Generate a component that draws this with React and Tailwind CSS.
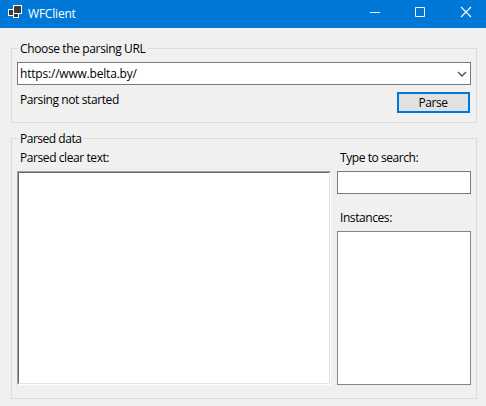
import React from "react";

function Group({ title, titleClass, className, children }) {
  return (
    <section className={`border border-[#dcdcdc] px-[5px] ${className}`}>
      <h2 className={`-mt-2 ml-px h-4 whitespace-nowrap bg-[#f0f0f0] pl-[2px] leading-4 ${titleClass}`}>{title}</h2>
      {children}
    </section>
  );
}

export default function App() {
  return (
    <div className="flex h-[406px] w-[486px] flex-col overflow-hidden bg-[#f0f0f0] font-['Open_Sans','Noto_Sans',sans-serif] text-[12px] leading-4 text-black">
      <header className="flex h-7 shrink-0 items-center bg-[#0078d7] text-white">
        <svg className="mb-[2px] ml-2 h-4 w-4" viewBox="0 0 16 16" shapeRendering="crispEdges">
          <path d="M.5 4.5h5v6h-5z" fill="#3a3a3a" stroke="#fff" />
          <path d="M5.5 8.5h5v4h-5z" fill="#3a3a3a" stroke="#fff" />
          <path d="M5.500 .5h8v8h-8z" fill="#3a3a3a" stroke="#fff" />
        </svg>
        <h1 className="ml-1 flex-1 -tracking-[0.2px]">WFClient</h1>
        <svg className="h-7 w-[138px]" viewBox="0 0 138 28" fill="none" stroke="#fff">
          <path d="M22 12.500h10M67.500 7.500h9v9h-9z" />
          <path d="M113 7l10 10M123 7l-10 10" strokeWidth="1.15" />
        </svg>
      </header>
      <main className="flex flex-col gap-[15px] px-[11px] pt-5">
        <Group title="Choose the parsing URL" titleClass="w-[130px] -tracking-[0.37px]" className="h-[75px] w-[466px]">
          <div className="mt-[5px] flex h-[23px] w-[454px] items-center justify-between border border-[#7a7a7a] bg-white pl-[2px] pr-[3px]">
            <span className="-tracking-[0.2px]">https://www.belta.by/</span>
            <svg className="h-[6px] w-[10px]" viewBox="0 0 10 6" fill="none" stroke="#505050" strokeWidth="1.3">
              <path d="M1 1l4 4l4-4" />
            </svg>
          </div>
          <div className="mt-[7px] flex justify-between pr-px">
            <span className="ml-[3px] -tracking-[0.4px]">Parsing not started</span>
            <button className="h-[21px] w-[73px] border-2 border-[#0078d7] bg-[#e1e1e1] pr-px leading-4 -tracking-[0.4px]">Parse</button>
          </div>
        </Group>
        <Group title="Parsed data" titleClass="w-[65px] -tracking-[0.48px]" className="h-[261px] w-[466px]">
          <div className="mt-[3px] flex gap-[6px]">
            <div>
              <p className="ml-[3px] h-[21px] -tracking-[0.42px]">Parsed clear text:</p>
              <div className="h-[214px] w-[314px] border border-b-white border-l-[#a0a0a0] border-r-white border-t-[#a0a0a0]">
                <div className="h-full border border-b-[#e3e3e3] border-l-[#696969] border-r-[#e3e3e3] border-t-[#696969] bg-white" />
              </div>
            </div>
            <div className="w-[134px]">
              <p className="ml-[3px] h-[21px] -tracking-[0.43px]">Type to search:</p>
              <div className="h-[23px] border border-[#7a7a7a] bg-white" />
              <p className="ml-[3px] mt-4 h-[21px] -tracking-[0.42px]">Instances:</p>
              <div className="h-[154px] border border-[#828790] bg-white" />
            </div>
          </div>
        </Group>
      </main>
    </div>
  );
}
